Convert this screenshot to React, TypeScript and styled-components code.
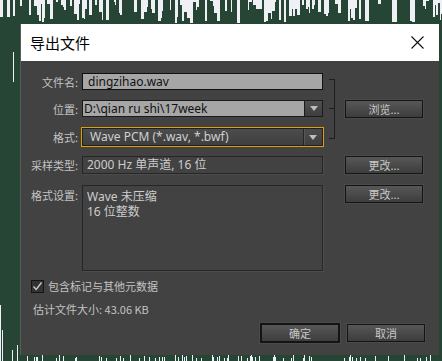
import React from 'react';
import styled, { createGlobalStyle } from 'styled-components';

const GREEN = '#274535';
const WHITE = '#eef0f6';
const LATIN = '"Noto Sans", "Noto Sans CJK SC", sans-serif';

function makeRng(seed: number) {
  let s = seed;
  return () => {
    s = (s * 1103515245 + 12345) & 0x7fffffff;
    return s / 0x7fffffff;
  };
}

type Bar = { x: number; y: number; h: number; w: number };

const bars: Bar[] = (() => {
  const r = makeRng(29);
  const out: Bar[] = [];
  let x = 0;
  while (x < 442) {
    const w = 1 + Math.floor(r() * 3);
    const v = r();
    let top: number;
    if (v < 0.45) top = 0;
    else if (v < 0.65) top = Math.floor(r() * 10);
    else top = Math.floor(10 + r() * 14);
    if (top > 0) out.push({ x, y: 0, h: top, w });
    x += w;
  }
  out.push({ x: 13, y: 52, h: 30, w: 1 });
  out.push({ x: 2, y: 330, h: 31, w: 1 });
  out.push({ x: 0, y: 305, h: 56, w: 1 });
  out.push({ x: 17, y: 345, h: 16, w: 1 });
  out.push({ x: 12, y: 350, h: 11, w: 1 });
  for (let bx = 21; bx < 442; bx++) {
    if (r() < 0.2) {
      const y = 355 + Math.floor(r() * 4);
      out.push({ x: bx, y, h: 361 - y, w: 1 });
    }
  }
  return out;
})();

const Global = createGlobalStyle`
  html, body { margin: 0; padding: 0; background: ${GREEN}; }
  body { font-family: "Noto Sans CJK SC", "Noto Sans", sans-serif; }
  * { box-sizing: border-box; }
`;

const Stage = styled.div`
  position: relative;
  width: 442px;
  height: 361px;
  overflow: hidden;
  padding: 24px 0 0 21px;
  background: ${GREEN};
`;

const Backdrop = styled.svg`
  position: absolute;
  left: 0;
  top: 0;
`;

const Dialog = styled.div`
  position: relative;
  width: 418px;
  height: 331px;
  display: flex;
  flex-direction: column;
  background: #424242;
  box-shadow: -1px 0 0 #5c5c5c;
`;

const TitleBar = styled.div`
  height: 37px;
  flex: none;
  background: #ffffff;
  display: flex;
  align-items: center;
  justify-content: space-between;
  padding: 0 15px 0 9px;
`;

const Title = styled.div`
  font-size: 15px;
  color: #000;
  line-height: 20px;
`;

const Body = styled.div`
  flex: 1;
  display: flex;
  flex-direction: column;
  padding: 12px 14px 12px 0;
  color: #c6c6c6;
`;

const Group = styled.div`
  display: flex;
`;

const FieldsCol = styled.div`
  display: flex;
  flex-direction: column;
`;

const Row = styled.div<{ $mt?: number; $top?: boolean }>`
  display: flex;
  align-items: ${(p) => (p.$top ? 'flex-start' : 'center')};
  margin-top: ${(p) => p.$mt ?? 0}px;
`;

const Label = styled.div<{ $pt?: number }>`
  width: 61px;
  flex: none;
  padding-right: 4px;
  padding-top: ${(p) => p.$pt ?? 0}px;
  text-align: right;
  font-size: 11px;
  line-height: 14px;
  color: #c2c2c2;
  white-space: nowrap;
`;

const TextInput = styled.div`
  width: 241px;
  height: 17px;
  background: #a6a6a6;
  border: 1px solid #111;
  color: #111;
  font-family: ${LATIN};
  font-size: 12px;
  line-height: 15px;
  padding-left: 5px;
  white-space: nowrap;
`;

const Combo = styled.div`
  width: 241px;
  height: 17px;
  display: flex;
  border: 1px solid #1b1b1b;
`;

const ComboText = styled.div`
  flex: 1;
  background: #a6a6a6;
  color: #111;
  font-family: ${LATIN};
  font-size: 12px;
  line-height: 15px;
  padding-left: 1px;
  white-space: nowrap;
`;

const DropBtn = styled.div`
  width: 18px;
  flex: none;
  display: flex;
  align-items: center;
  justify-content: center;
  background: linear-gradient(#505050, #3e3e3e);
  border-left: 1px solid #1b1b1b;
`;

const Triangle = styled.div`
  width: 0;
  height: 0;
  border-left: 4px solid transparent;
  border-right: 4px solid transparent;
  border-top: 5px solid #bdbdbd;
`;

const SelectBox = styled.div`
  width: 241px;
  height: 18px;
  display: flex;
  border: 1px solid #1f1f1f;
  outline: 1px solid #e0a00c;
  background: linear-gradient(#4c4c4c, #3f3f3f);
`;

const SelectText = styled.div`
  flex: 1;
  color: #d0d0d0;
  font-family: ${LATIN};
  font-size: 12px;
  line-height: 16px;
  padding-left: 7px;
  white-space: nowrap;
`;

const SelectDrop = styled.div`
  width: 19px;
  flex: none;
  display: flex;
  align-items: center;
  justify-content: center;
  border-left: 1px solid #262626;
  box-shadow: inset 1px 0 0 #575757;
`;

const BracketCol = styled.div`
  width: 22px;
  flex: none;
`;

const Bracket = styled.div`
  position: relative;
  margin: 6px 0 0 6px;
  width: 6px;
  height: 60px;
  border: 1px solid #1d1d1d;
  border-left: none;
  &::after {
    content: '';
    position: absolute;
    left: 0;
    top: 28px;
    width: 5px;
    height: 1px;
    background: #1d1d1d;
  }
`;

const Spacer = styled.div`
  width: 22px;
  flex: none;
`;

const ButtonCol = styled.div<{ $mt?: number }>`
  width: 80px;
  flex: none;
  padding-top: ${(p) => p.$mt ?? 0}px;
`;

const Button = styled.div<{ $primary?: boolean; $w?: number }>`
  width: ${(p) => p.$w ?? 78}px;
  height: ${(p) => (p.$primary ? 20 : 18)}px;
  border: ${(p) => (p.$primary ? 2 : 1)}px solid #141414;
  background: linear-gradient(#575757, #3d3d3d);
  color: #c8c8c8;
  font-size: 11px;
  line-height: 14px;
  display: flex;
  align-items: center;
  justify-content: center;
  box-shadow: 0 0 0 1px #4a4a4a;
`;

const InfoBox = styled.div<{ $h: number }>`
  width: 241px;
  height: ${(p) => p.$h}px;
  border: 1px solid #262626;
  box-shadow: 1px 1px 0 #4c4c4c;
  color: #cdcdcd;
  font-family: ${LATIN};
  font-size: 12px;
  line-height: 15px;
  padding: ${(p) => (p.$h > 30 ? '3px 0 0 4px' : '0 0 0 4px')};
  white-space: nowrap;
`;

const InfoLine = styled.div`
  height: 15px;
  line-height: 15px;
`;

const CheckRow = styled.div`
  display: flex;
  align-items: center;
  margin-top: 8px;
  padding-left: 10px;
`;

const CheckBox = styled.div`
  width: 13px;
  height: 13px;
  border: 1px solid #151515;
  background: #333;
  display: flex;
  align-items: center;
  justify-content: center;
`;

const CheckLabel = styled.div`
  margin-left: 4px;
  font-size: 11px;
  line-height: 14px;
  color: #c2c2c2;
`;

const SizeText = styled.div`
  margin-top: 9px;
  padding-left: 12px;
  font-size: 11px;
  line-height: 14px;
  color: #c2c2c2;
`;

const Footer = styled.div`
  margin-top: auto;
  display: flex;
  justify-content: flex-end;
  align-items: center;
  gap: 7px;
`;

export default function App() {
  return (
    <>
      <Global />
      <Stage>
        <Backdrop width={442} height={361} viewBox="0 0 442 361">
          {bars.map((b, i) => (
            <rect key={i} x={b.x} y={b.y} width={b.w} height={b.h} fill={WHITE} />
          ))}
        </Backdrop>
        <Dialog>
          <TitleBar>
            <Title>导出文件</Title>
            <svg width="13" height="13" viewBox="0 0 13 13">
              <path d="M0.5 0.5 L12.5 12.5 M12.5 0.5 L0.5 12.5" stroke="#111" strokeWidth="1.1" fill="none" />
            </svg>
          </TitleBar>
          <Body>
            <Group>
              <FieldsCol>
                <Row>
                  <Label>文件名:</Label>
                  <TextInput>dingzihao.wav</TextInput>
                </Row>
                <Row $mt={10}>
                  <Label>位置:</Label>
                  <Combo>
                    <ComboText>D:\qian ru shi\17week</ComboText>
                    <DropBtn>
                      <Triangle />
                    </DropBtn>
                  </Combo>
                </Row>
                <Row $mt={11}>
                  <Label>格式:</Label>
                  <SelectBox>
                    <SelectText>Wave PCM (*.wav, *.bwf)</SelectText>
                    <SelectDrop>
                      <Triangle />
                    </SelectDrop>
                  </SelectBox>
                </Row>
              </FieldsCol>
              <BracketCol>
                <Bracket />
              </BracketCol>
              <ButtonCol $mt={27}>
                <Button>浏览...</Button>
              </ButtonCol>
            </Group>
            <Row $mt={10}>
              <Label>采样类型:</Label>
              <InfoBox $h={18}>2000 Hz 单声道, 16 位</InfoBox>
              <Spacer />
              <ButtonCol>
                <Button>更改...</Button>
              </ButtonCol>
            </Row>
            <Row $mt={11} $top>
              <Label $pt={3}>格式设置:</Label>
              <InfoBox $h={86}>
                <InfoLine>Wave 未压缩</InfoLine>
                <InfoLine>16 位整数</InfoLine>
              </InfoBox>
              <Spacer />
              <ButtonCol>
                <Button>更改...</Button>
              </ButtonCol>
            </Row>
            <CheckRow>
              <CheckBox>
                <svg width="11" height="11" viewBox="0 0 11 11">
                  <path d="M1.5 5.5 L4.2 8.5 L9.5 1.5" stroke="#c8c8c8" strokeWidth="1.4" fill="none" />
                </svg>
              </CheckBox>
              <CheckLabel>包含标记与其他元数据</CheckLabel>
            </CheckRow>
            <SizeText>估计文件大小: 43.06 KB</SizeText>
            <Footer>
              <Button $primary $w={80}>确定</Button>
              <Button>取消</Button>
            </Footer>
          </Body>
        </Dialog>
      </Stage>
    </>
  );
}
